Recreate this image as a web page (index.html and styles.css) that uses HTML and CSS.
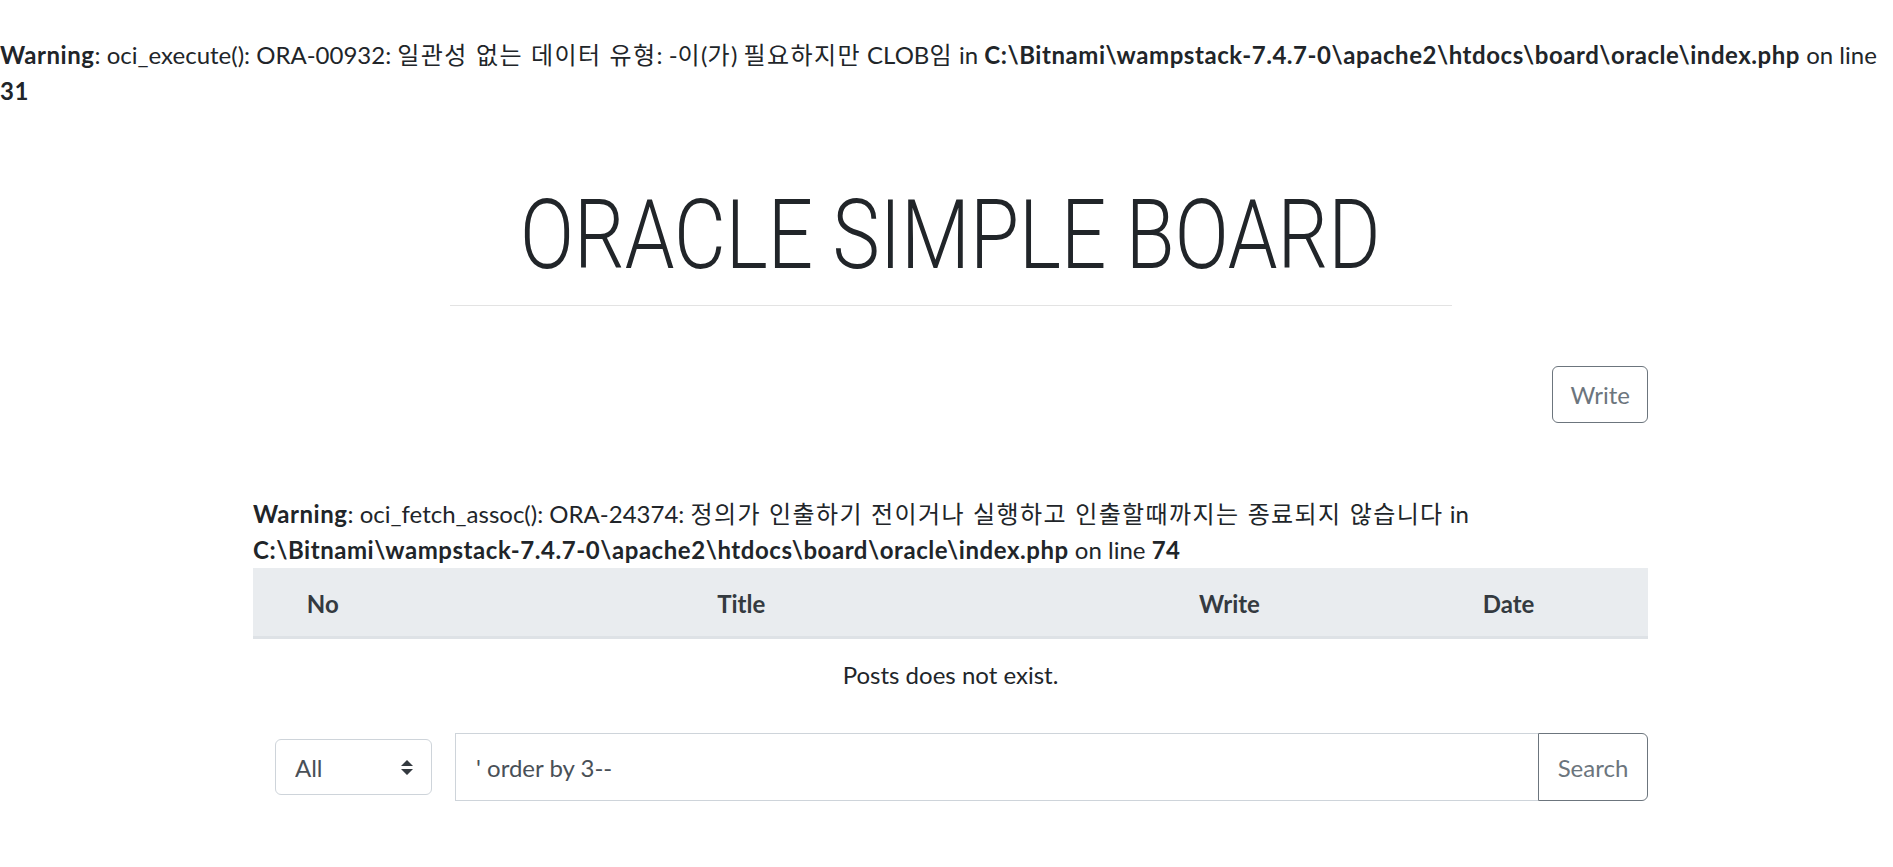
FILE: index.html
```html
<!DOCTYPE html>
<html lang="ko">
<head>
<meta charset="utf-8">
<title>ORACLE SIMPLE BOARD</title>
<link rel="stylesheet" href="styles.css">
</head>
<body>
<div class="php-warning top-warning"><br><b>Warning</b>: oci_execute(): ORA-00932: <span class="ko">일관성 없는 데이터 유형</span>: -<span class="ko">이</span>(<span class="ko">가</span>) <span class="ko">필요하지만</span> CLOB<span class="ko">임</span> in <b>C:\Bitnami\wampstack-7.4.7-0\apache2\htdocs\board\oracle\index.php</b> on line <b>31</b></div>
<div class="container">
  <h1 class="title"><span class="title-text">ORACLE SIMPLE BOARD</span></h1>
  <hr class="divider">
  <div class="toolbar"><a class="btn btn-outline" href="#">Write</a></div>
  <div class="php-warning board-warning"><br><b>Warning</b>: oci_fetch_assoc(): ORA-24374: <span class="ko">정의가 인출하기 전이거나 실행하고 인출할때까지는 종료되지 않습니다</span> in <b>C:\Bitnami\wampstack-7.4.7-0\apache2\htdocs\board\oracle\index.php</b> on line <b>74</b></div>
  <table class="board">
    <thead>
      <tr>
        <th class="c-no">No</th>
        <th class="c-title">Title</th>
        <th class="c-write">Write</th>
        <th class="c-date">Date</th>
      </tr>
    </thead>
    <tbody>
      <tr><td colspan="4" class="empty">Posts does not exist.</td></tr>
    </tbody>
  </table>
  <form class="search" onsubmit="return false">
    <div class="select-wrap">
      <select class="select">
        <option>All</option>
        <option>Title</option>
        <option>Content</option>
      </select>
      <svg class="select-arrow" viewBox="0 0 4 5" width="12" height="15"><path fill="#343a40" d="M2 0L0 2h4zm0 5L0 3h4z"/></svg>
    </div>
    <div class="input-group">
      <input class="query" type="text" value="' order by 3--">
      <button class="btn btn-outline btn-search" type="submit">Search</button>
    </div>
  </form>
</div>
</body>
</html>
```
FILE: styles.css
```css
html, body {
  margin: 0;
  padding: 0;
}
body {
  font-family: Lato, "Noto Sans CJK KR", sans-serif;
  font-size: 24px;
  line-height: 36px;
  color: #212529;
  background: #fff;
}
.php-warning b {
  font-weight: 700;
  letter-spacing: 0.55px;
}
.ko {
  font-family: "Noto Sans CJK KR", sans-serif;
  letter-spacing: 1.4px;
}
.container {
  width: 1395px;
  margin-left: 253px;
}
.title {
  font-family: Roboto, sans-serif;
  font-weight: 300;
  font-size: 96px;
  line-height: 1.2;
  text-align: center;
  margin: 69px 0 0;
}
.title-text {
  display: inline-block;
  transform: scaleX(0.83);
  transform-origin: center;
}
.divider {
  width: 1002px;
  margin: 12px auto 0;
  border: 0;
  border-top: 1px solid #e3e3e3;
  height: 0;
}
.toolbar {
  display: flex;
  justify-content: flex-end;
  margin-top: 60px;
}
.btn {
  display: inline-flex;
  align-items: center;
  justify-content: center;
  box-sizing: border-box;
  font-family: inherit;
  font-size: 24px;
  color: #6c757d;
  text-decoration: none;
  background: #fff;
  border: 1px solid #6c757d;
  border-radius: 6px;
  padding: 0 17px;
  height: 57px;
}
.board-warning {
  margin-top: 36px;
}
.board {
  width: 100%;
  border-collapse: collapse;
  table-layout: fixed;
}
.board th {
  background: #e9ecef;
  color: #343a40;
  font-weight: 700;
  text-align: center;
  padding: 18px 0 14px;
  line-height: 36px;
  border-bottom: 3px solid #dee2e6;
}
.c-no { width: 10%; }
.c-title { width: 50%; }
.c-write { width: 20%; }
.c-date { width: 20%; }
.board td {
  text-align: center;
  padding: 18px 0;
  line-height: 36px;
}
.search {
  display: flex;
  align-items: center;
  gap: 23px;
  margin-top: 22px;
  padding-left: 22px;
}
.select-wrap {
  position: relative;
  width: 157px;
  height: 56px;
  flex: none;
}
.select {
  appearance: none;
  -webkit-appearance: none;
  width: 100%;
  height: 100%;
  box-sizing: border-box;
  border: 1px solid #ced4da;
  border-radius: 6px;
  background: #fff;
  font-family: inherit;
  font-size: 24px;
  color: #495057;
  padding: 0 40px 0 19px;
}
.select-arrow {
  position: absolute;
  right: 19px;
  top: 21px;
  pointer-events: none;
}
.input-group {
  flex: 1;
  display: flex;
  height: 68px;
}
.query {
  flex: 1;
  min-width: 0;
  box-sizing: border-box;
  height: 100%;
  border: 1px solid #ced4da;
  border-right: 0;
  border-radius: 0;
  font-family: inherit;
  font-size: 24px;
  color: #495057;
  padding: 0 20px;
  outline: none;
}
.btn-search {
  height: 100%;
  width: 110px;
  border-radius: 0 6px 6px 0;
  cursor: pointer;
}
```
